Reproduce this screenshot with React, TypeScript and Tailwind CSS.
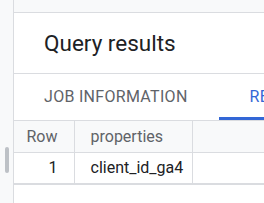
export default function App() {
  return (
    <div className="flex h-[203px] w-[264px] overflow-hidden bg-white font-['Roboto',sans-serif]">
      {/* left rail */}
      <div className="relative w-[14px] shrink-0 border-r border-[#dadce0] bg-[#f8f9fa]">
        <div className="absolute left-[5px] top-[147px] h-[26px] w-[4px] rounded-full bg-[#bdc1c6]" />
      </div>

      <div className="flex min-w-0 flex-1 flex-col">
        <div className="h-[13px] shrink-0 border-b border-[#dadce0] bg-[#f8f9fa]" />

        <div className="flex h-[61px] shrink-0 items-center border-b border-[#dadce0] pl-[30px]">
          <h1 className="whitespace-nowrap text-[22.5px] leading-none text-[#202124]">Query results</h1>
        </div>

        <div className="flex h-[46px] shrink-0 items-stretch whitespace-nowrap pl-[30px] text-[16px] tracking-[0.3px]">
          <div className="flex items-center text-[#5f6368]">JOB INFORMATION</div>
          <div className="ml-[31px] flex flex-col justify-center border-b-[3px] border-[#3367d6] px-[31px] pt-[3px] text-[#3367d6]">
            RESULTS
          </div>
        </div>

        <table className="w-[300px] table-fixed border-collapse text-[16px]">
          <colgroup>
            <col className="w-[60px]" />
            <col className="w-[118px]" />
            <col />
          </colgroup>
          <thead>
            <tr className="h-[32px] bg-[#f8f9fa] text-[#5f6368]">
              <th className="border border-l-0 border-[#dadce0] pr-[16px] text-right font-normal">Row</th>
              <th className="border border-[#dadce0] pl-[16px] text-left font-normal">properties</th>
              <th className="border border-[#dadce0]" />
            </tr>
          </thead>
          <tbody>
            <tr className="h-[31px] border-b-2 border-[#dadce0] text-[#202124]">
              <td className="border-r border-[#dadce0] pr-[16px] text-right">1</td>
              <td className="border-r border-[#dadce0] pl-[16px]">client_id_ga4</td>
              <td />
            </tr>
          </tbody>
        </table>
      </div>
    </div>
  );
}
